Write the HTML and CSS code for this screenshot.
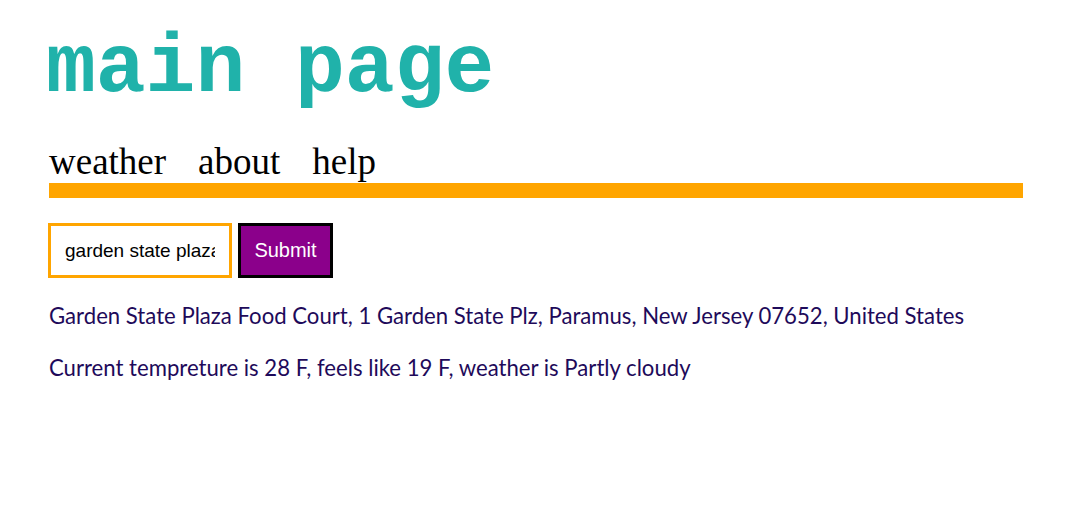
FILE: index.html
```html
<!DOCTYPE html>
<html>
<head>
<meta charset="utf-8">
<link rel="stylesheet" href="styles.css">
</head>
<body>
<div class="page">
  <h1 class="title">main page</h1>
  <nav class="nav">
    <span class="nav-item">weather</span>
    <span class="nav-item">about</span>
    <span class="nav-item">help</span>
  </nav>
  <div class="bar"></div>
  <form class="search">
    <input class="search-input" type="text" value="garden state plaza">
    <button class="search-btn" type="button">Submit</button>
  </form>
  <p class="info">Garden State Plaza Food Court, 1 Garden State Plz, Paramus, New Jersey 07652, United States</p>
  <p class="info">Current tempreture is 28 F, feels like 19 F, weather is Partly cloudy</p>
</div>
</body>
</html>
```

FILE: styles.css
```css
html, body {
  margin: 0;
  padding: 0;
  background: #ffffff;
}
.page {
  padding: 0 43px 0 49px;
}
.title {
  margin: 0 0 0 -3px;
  padding-top: 24px;
  font-family: "Liberation Mono", "Courier New", monospace;
  font-weight: bold;
  font-size: 83px;
  line-height: 90px;
  color: #20b2aa;
}
.nav {
  display: flex;
  gap: 32px;
  margin-top: 28px;
  font-family: "Liberation Serif", "Times New Roman", serif;
  font-size: 37px;
  line-height: 40px;
  color: #000;
}
.bar {
  height: 15px;
  background: #ffa500;
  margin-top: 1px;
}
.search {
  display: flex;
  gap: 6px;
  margin-top: 25px;
  margin-left: -1px;
}
.search-input {
  box-sizing: border-box;
  width: 184px;
  height: 55px;
  border: 3px solid #ffa500;
  padding: 0 14px;
  font-family: "Liberation Sans", Arial, sans-serif;
  font-size: 19px;
  color: #000;
  outline: none;
}
.search-btn {
  box-sizing: border-box;
  width: 95px;
  height: 55px;
  border: 3px solid #000;
  background: #8b008b;
  color: #fff;
  font-family: "Liberation Sans", Arial, sans-serif;
  font-size: 20px;
  padding: 0;
}
.info {
  margin: 0;
  font-family: "Lato", "Noto Sans", sans-serif;
  font-size: 22.15px;
  line-height: 52px;
  color: #1e0a5a;
}
.info:first-of-type {
  margin-top: 12px;
}
```
